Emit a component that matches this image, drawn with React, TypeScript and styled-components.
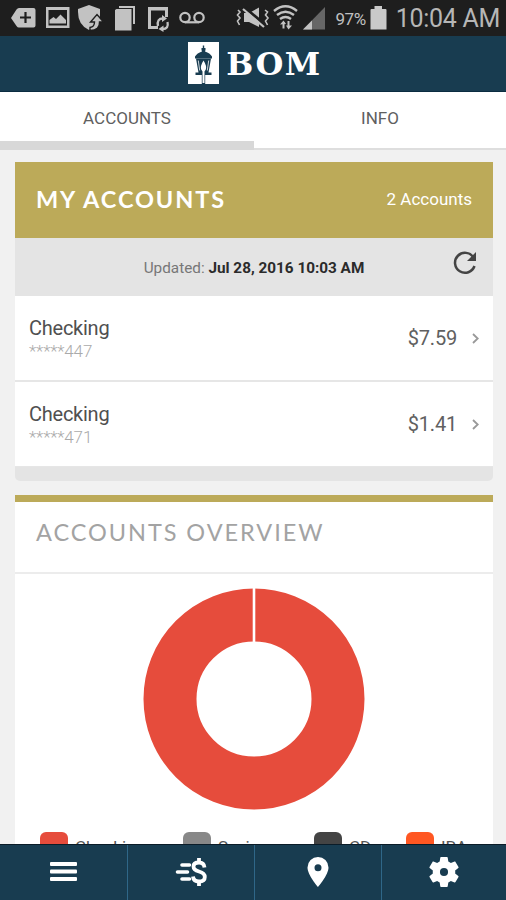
import React from 'react';
import styled, { createGlobalStyle } from 'styled-components';

const navy = '#183c50';
const gold = '#bcaa59';

const GlobalStyle = createGlobalStyle`
  * { box-sizing: border-box; }
  body { margin: 0; background: #f1f1f1; font-family: Roboto, "Liberation Sans", sans-serif; }
  svg { display: block; flex: none; }
`;

const Screen = styled.div`
  width: 506px;
  height: 900px;
  display: flex;
  flex-direction: column;
  overflow: hidden;
  background: #f1f1f1;
`;

const StatusBar = styled.header`
  height: 36px;
  flex: none;
  display: flex;
  align-items: center;
  justify-content: space-between;
  padding: 0 6px 0 11px;
  background: #1e1e1e;
  color: #c0c0c0;
`;

const StatusGroup = styled.div`
  display: flex;
  align-items: center;
  white-space: nowrap;
`;

const Percent = styled.span`
  font-size: 17px;
  line-height: 36px;
  letter-spacing: -0.4px;
  margin: 1px 4px 0 9px;
`;

const Clock = styled.span`
  font-size: 25px;
  line-height: 36px;
  letter-spacing: -0.3px;
  margin: 1px 0 0 9px;
  color: #b6b6b6;
`;

const BrandBar = styled.div`
  height: 56px;
  flex: none;
  display: flex;
  align-items: center;
  justify-content: center;
  gap: 7px;
  padding: 0 0 1px 4px;
  background: ${navy};
  border-bottom: 1px solid #0b2c40;
`;

const BrandName = styled.span`
  font-family: "DejaVu Serif", serif;
  font-weight: 700;
  font-size: 32px;
  line-height: 54px;
  letter-spacing: 1.5px;
  padding-top: 2px;
  color: #fff;
`;

const Tabs = styled.nav`
  height: 58px;
  flex: none;
  display: grid;
  grid-template-columns: 254px 1fr;
  background: #fff;
`;

const Tab = styled.div<{ $active?: boolean }>`
  height: 58px;
  padding-top: 3px;
  font-size: 17px;
  line-height: 46px;
  letter-spacing: 0;
  text-align: center;
  color: #606060;
  border-bottom: ${p => (p.$active ? '9px solid #d8d8d8' : '2px solid #dedede')};
`;

const Content = styled.main`
  flex: 1;
  min-height: 0;
  overflow: hidden;
  padding: 12px 13px 0 15px;
`;

const AccountsHeader = styled.div`
  height: 76px;
  display: flex;
  align-items: center;
  justify-content: space-between;
  padding: 0 21px 3px 21px;
  background: ${gold};
  color: #fff;
`;

const Heading = styled.h2<{ $muted?: boolean }>`
  margin: 0;
  font-family: Lato, sans-serif;
  font-size: 23.5px;
  line-height: 30px;
  font-weight: 700;
  letter-spacing: 1.9px;
  color: #fff;
  ${p => p.$muted && 'color: #a3a3a3; font-weight: 400; letter-spacing: 1.95px;'}
`;

const Count = styled.span`
  font-size: 17px;
  line-height: 24px;
`;

const UpdatedBar = styled.div`
  height: 58px;
  display: grid;
  grid-template-columns: 50px 1fr 50px;
  align-items: center;
  background: #e4e4e4;
  font-size: 15.3px;
  color: #777;
  text-align: center;
  strong { font-weight: 700; color: #2b2b2b; }
`;

const UpdatedText = styled.span`
  padding-top: 1px;
`;

const Row = styled.div`
  height: 86px;
  display: flex;
  align-items: center;
  padding: 0 13px 0 14px;
  background: #fff;
  border-bottom: 2px solid #e6e6e6;
`;

const RowText = styled.div`
  flex: 1;
  padding-top: 1px;
`;

const RowName = styled.div`
  font-size: 20px;
  line-height: 24px;
  letter-spacing: -0.25px;
  color: #505050;
`;

const RowNumber = styled.div`
  font-size: 17px;
  line-height: 22px;
  letter-spacing: -0.15px;
  font-weight: 300;
  color: #aaa;
`;

const Amount = styled.span`
  font-size: 20px;
  line-height: 24px;
  letter-spacing: -0.2px;
  color: #606060;
  margin-right: 15px;
`;

const CardFoot = styled.div`
  height: 14px;
  margin-bottom: 14px;
  margin-top: -1px;
  background: #e4e4e4;
  border-radius: 0 0 5px 5px;
`;

const Overview = styled.section`
  height: 400px;
  background: #fff;
  border-top: 7px solid ${gold};
`;

const OverviewHead = styled.div`
  height: 72px;
  padding: 15px 21px 0;
  border-bottom: 2px solid #ececec;
`;

const ChartArea = styled.div`
  display: flex;
  justify-content: center;
  padding-top: 14px;
  height: 258px;
`;

const Legend = styled.div`
  display: grid;
  grid-template-columns: 143px 131px 92px 1fr;
  padding-left: 25px;
`;

const LegendItem = styled.div`
  display: flex;
  gap: 7px;
  font-size: 17px;
  line-height: 31px;
  color: #555;
`;

const Swatch = styled.span<{ $color: string }>`
  width: 28px;
  height: 28px;
  border-radius: 6px;
  background: ${p => p.$color};
`;

const BottomNav = styled.nav`
  height: 56px;
  flex: none;
  display: grid;
  grid-template-columns: 128px 127px 127px 1fr;
  background: ${navy};
  border-top: 1px solid #0b1c28;
`;

const NavItem = styled.button`
  border: 0;
  padding: 0 0 1px;
  background: none;
  display: flex;
  align-items: center;
  justify-content: center;
  &:not(:last-child) { border-right: 1px solid #2f6788; }
`;

const NotificationIcons = () => (
  <svg width="196" height="36" viewBox="0 0 196 36" fill="#c2c2c2">
    <path d="M0 18 5.500 9.500Q6.500 8 8 8H22.500Q24.500 8 24.500 10V25.500Q24.500 27.500 22.500 27.500H8Q6.500 27.500 5.500 26Z" />
    <path d="M14.500 12v11M9 17.500h11" stroke="#1e1e1e" strokeWidth="2.200" />
    <path fillRule="evenodd" d="M35 7H58.500V28H35ZM37.500 10V25.500H56V10Z" />
    <path d="M38.500 23.500V20L42.500 17 45 19 49.500 14.500 55 20V23.500Z" />
    <path d="M67 9 78 5 89 9V15Q89 25 78 30Q67 25 67 12Z" />
    <path
      d="M79 30.500V27.500Q83.500 27 83.500 22H79.500L86 14.500 92.500 22H88.500Q89 30.500 79 30.500Z"
      stroke="#1e1e1e"
      strokeWidth="1.400"
    />
    <path d="M108 6H124V24H122V8H108Z" />
    <path d="M104 10 105.500 9H120.500V30.500H104Z" />
    <path fillRule="evenodd" d="M137 7H157V17H154V10.500H140V26H147V29H137Z" />
    <g fill="none" stroke="#c2c2c2" strokeWidth="2.300">
      <path d="M147 26Q145.500 18.500 152 18.500M156.500 22Q158 29 151.500 29" />
    </g>
    <path d="M151 15V22L156 18.500ZM152.500 25.500V32L147.500 29Z" />
    <g fill="none" stroke="#c2c2c2" strokeWidth="2.200">
      <circle cx="174" cy="17.500" r="4.700" />
      <circle cx="188" cy="17.500" r="4.700" />
      <path d="M174 22.300H188" />
    </g>
  </svg>
);

const SignalIcons = () => (
  <svg width="90" height="36" viewBox="0 0 90 36">
    <g fill="#c2c2c2">
      <path d="M8 13H13L23 7.500V27L13 22H8Z" />
      <path d="M9 8 30 25.500" stroke="#1e1e1e" strokeWidth="3" />
      <path d="M7 9 28 27" stroke="#c2c2c2" strokeWidth="2.200" />
      <path
        d="M2 10 4 12 1.500 15 4 18 1.500 21 3.500 25M29 10 31.500 12 29.500 15 32 18 29.500 21 31.500 25"
        fill="none"
        stroke="#c2c2c2"
        strokeWidth="1.600"
      />
    </g>
    <g fill="none" stroke="#c2c2c2" strokeWidth="2.400">
      <path d="M38 11Q49.500 1.500 61 11M41 15Q49.500 8.500 58 15M44 19Q49.500 15 55 19" />
      <path d="M47.500 22V28.500M52.500 21V27" strokeWidth="2" />
    </g>
    <path d="M44 24.500 47.500 20.500 50 24ZM50 25.500 52.500 29.500 56 25.500Z" fill="#c2c2c2" />
    <path d="M67 29.500 89 7V29.500Z" fill="#666" />
    <path d="M67 29.500 76 20.500V29.500Z" fill="#c2c2c2" />
  </svg>
);

const BatteryIcon = () => (
  <svg width="17" height="24" viewBox="0 0 17 24">
    <path d="M4.500 0H12V3H15.500Q16.500 3 16.500 4V23.500H.500V4Q.500 3 1.500 3H4.500Z" fill="#c9c9c9" />
  </svg>
);

const LampLogo = () => (
  <svg width="31" height="42" viewBox="0 0 31 42">
    <rect width="31" height="42" fill="#fff" />
    <g fill={navy}>
      <path d="M14.800 3.500H16.200V6H17.500V8L17 9.500Q22 11 24 14.500V16.500H7V14.500Q9 11 14 9.500L13.500 8V6H14.800Z" />
      <path d="M8 16.500H23L20.500 30.500H23.500V33H7.500V30.500H10.500Z" />
      <path d="M13.800 33H17.200V42H13.800Z" />
    </g>
    <path d="M15.500 18.500Q19 24 17.800 27.500L16.500 29.500V41H14.500V29.500L13.200 27.500Q12 24 15.500 18.500Z" fill="#fff" />
    <path d="M10.300 18.500 11.700 28.500M20.700 18.500 19.300 28.500" stroke="#fff" strokeWidth=".8" />
  </svg>
);

const RefreshIcon = () => (
  <svg width="24" height="24" viewBox="0 0 24 24">
    <path d="M20.500 6.500A10 10 0 1 0 21.500 15" fill="none" stroke="#444" strokeWidth="2.500" />
    <path d="M23 1V10H14Z" fill="#444" />
  </svg>
);

const RefreshSlot = styled.div`
  padding: 0 0 8px 10px;
`;

const Chevron = () => (
  <svg width="8" height="12" viewBox="0 0 8 12">
    <path d="M1 2 5.700 6.500 1 11" fill="none" stroke="#999" strokeWidth="1.800" />
  </svg>
);

const Donut = () => (
  <svg width="223" height="222" viewBox="0 0 223 222">
    <circle cx="111" cy="111" r="84" fill="none" stroke="#e64c3c" strokeWidth="53" />
    <path d="M111 0V55" stroke="#fff" strokeWidth="2.600" />
  </svg>
);

const MenuIcon = () => (
  <svg width="28" height="20" viewBox="0 0 28 20" fill="#fff">
    <rect width="27" height="4" y="0" rx="1" />
    <rect width="27" height="4" y="7.500" rx="1" />
    <rect width="27" height="4" y="15" rx="1" />
  </svg>
);

const PayIcon = () => (
  <svg width="32" height="30" viewBox="0 0 32 30" fill="none" stroke="#fff">
    <path d="M7 8H14.500M2.500 15H12.500M7 22H14.500" strokeWidth="3.600" strokeLinecap="round" />
    <path
      d="M29.500 10.500Q29 5.500 24 5.500 18.500 5.500 18.500 9.500 18.500 13 24 14.500 29.800 16 29.800 20 29.800 24.500 24 24.500 18.500 24.500 18 19.500M24 1V5M24 25V29"
      strokeWidth="3.800"
    />
  </svg>
);

const PinIcon = () => (
  <svg width="22" height="30" viewBox="0 0 22 30">
    <path
      fillRule="evenodd"
      fill="#fff"
      d="M11 0A10.500 10.500 0 0 0 .500 10.500C.500 18 11 30 11 30S21.500 18 21.500 10.500A10.500 10.500 0 0 0 11 0ZM11 7.300A3.500 3.500 0 1 1 11 14.300 3.500 3.500 0 0 1 11 7.300Z"
    />
  </svg>
);

const GearIcon = () => (
  <svg width="36" height="36" viewBox="0 0 24 24" fill="#fff">
    <path d="M19.430 12.980c.04-.32.07-.64.07-.98s-.03-.66-.07-.98l2.110-1.650c.19-.15.24-.42.12-.64l-2-3.460c-.12-.22-.39-.3-.61-.22l-2.490 1c-.52-.4-1.080-.73-1.690-.98l-.38-2.650C14.460 2.180 14.250 2 14 2h-4c-.25 0-.46.18-.49.42l-.38 2.650c-.61.25-1.170.59-1.690.98l-2.490-1c-.23-.09-.49 0-.61.22l-2 3.460c-.13.22-.07.49.12.64l2.110 1.650c-.04.32-.07.65-.07.98s.03.66.07.98l-2.110 1.650c-.19.15-.24.42-.12.64l2 3.460c.12.22.39.3.61.22l2.490-1c.52.4 1.080.73 1.690.98l.38 2.650c.03.24.24.42.49.42h4c.25 0 .46-.18.49-.42l.38-2.650c.61-.25 1.170-.59 1.690-.98l2.490 1c.23.09.49 0 .61-.22l2-3.460c.12-.22.07-.49-.12-.64l-2.110-1.650zM12 14.700a2.700 2.700 0 1 1 0-5.400 2.700 2.700 0 0 1 0 5.400z" />
  </svg>
);

const accounts = [
  { name: 'Checking', number: '*****447', amount: '$7.59' },
  { name: 'Checking', number: '*****471', amount: '$1.41' },
];

const legend = [
  { label: 'Checking', color: '#e64c3c' },
  { label: 'Savings', color: '#888' },
  { label: 'CD', color: '#444' },
  { label: 'IRA', color: '#ff5722' },
];

export default function App() {
  return (
    <Screen>
      <GlobalStyle />
      <StatusBar>
        <NotificationIcons />
        <StatusGroup>
          <SignalIcons />
          <Percent>97%</Percent>
          <BatteryIcon />
          <Clock>10:04 AM</Clock>
        </StatusGroup>
      </StatusBar>
      <BrandBar>
        <LampLogo />
        <BrandName>BOM</BrandName>
      </BrandBar>
      <Tabs>
        <Tab $active>ACCOUNTS</Tab>
        <Tab>INFO</Tab>
      </Tabs>
      <Content>
        <section>
          <AccountsHeader>
            <Heading>MY ACCOUNTS</Heading>
            <Count>2 Accounts</Count>
          </AccountsHeader>
          <UpdatedBar>
            <span />
            <UpdatedText>Updated: <strong>Jul 28, 2016 10:03 AM</strong></UpdatedText>
            <RefreshSlot><RefreshIcon /></RefreshSlot>
          </UpdatedBar>
          {accounts.map(a => (
            <Row key={a.number}>
              <RowText>
                <RowName>{a.name}</RowName>
                <RowNumber>{a.number}</RowNumber>
              </RowText>
              <Amount>{a.amount}</Amount>
              <Chevron />
            </Row>
          ))}
          <CardFoot />
        </section>
        <Overview>
          <OverviewHead>
            <Heading $muted>ACCOUNTS OVERVIEW</Heading>
          </OverviewHead>
          <ChartArea>
            <Donut />
          </ChartArea>
          <Legend>
            {legend.map(item => (
              <LegendItem key={item.label}>
                <Swatch $color={item.color} />
                {item.label}
              </LegendItem>
            ))}
          </Legend>
        </Overview>
      </Content>
      <BottomNav>
        <NavItem aria-label="Menu"><MenuIcon /></NavItem>
        <NavItem aria-label="Payments"><PayIcon /></NavItem>
        <NavItem aria-label="Locations"><PinIcon /></NavItem>
        <NavItem aria-label="Settings"><GearIcon /></NavItem>
      </BottomNav>
    </Screen>
  );
}
